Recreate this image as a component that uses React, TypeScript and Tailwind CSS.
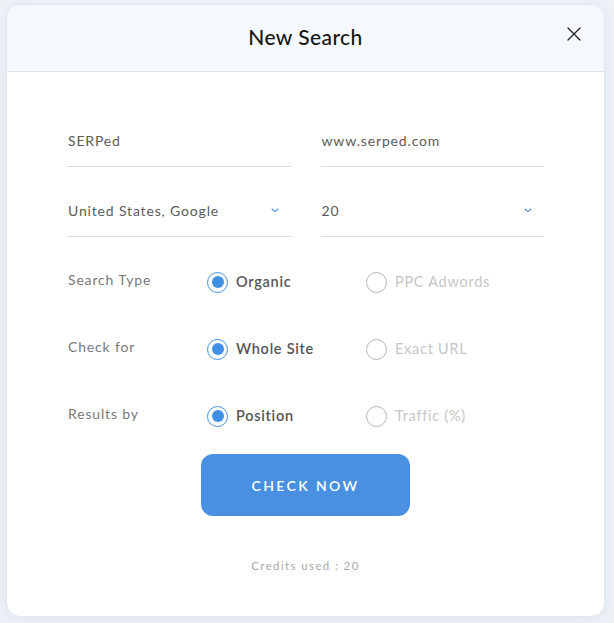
import { useState } from "react";

const FONT = { fontFamily: "Lato, 'Open Sans', sans-serif" };

function Field({ value, select }: { value: string; select?: boolean }) {
  return (
    <div className="flex items-center justify-between border-b border-[#dcdde2] pb-[15px]">
      <span className="text-[14px] leading-[20px] tracking-[0.06em] text-[#5b5b5b] pl-[1px]">{value}</span>
      {select && (
        <svg className="mr-[12px] mt-[-2px]" width="8" height="5" viewBox="0 0 8 5" fill="none">
          <path d="M1 1l3 2.6L7 1" stroke="#4a90e2" strokeWidth="1.1" strokeLinecap="round" />
        </svg>
      )}
    </div>
  );
}

function Radio({ label, checked, onClick }: { label: string; checked: boolean; onClick: () => void }) {
  return (
    <button type="button" onClick={onClick} className="flex items-center gap-[8px]">
      {checked ? (
        <span className="w-[21px] h-[21px] rounded-full border-[1.5px] border-[#4a90e2] flex items-center justify-center">
          <span className="w-[12px] h-[12px] rounded-full bg-[#3f8fe6]" />
        </span>
      ) : (
        <span className="w-[21px] h-[21px] rounded-full border border-[#b4b4b4]" />
      )}
      <span
        className={`text-[14.5px] leading-[20px] tracking-[0.05em] ${
          checked ? "font-semibold text-[#555555]" : "text-[#c6c6c6]"
        }`}
      >
        {label}
      </span>
    </button>
  );
}

const ROWS = [
  { label: "Search Type", options: ["Organic", "PPC Adwords"] },
  { label: "Check for", options: ["Whole Site", "Exact URL"] },
  { label: "Results by", options: ["Position", "Traffic (%)"] },
];

export default function App() {
  const [picked, setPicked] = useState<number[]>([0, 0, 0]);

  return (
    <div className="min-h-[623px] bg-[#eef2f7] pt-[4px] pl-[6px]" style={FONT}>
      <div className="w-[599px] rounded-[14px] bg-white border border-[#e2e6ee] shadow-[0_2px_14px_rgba(160,175,200,0.18)] overflow-hidden">
        <div className="relative h-[67px] bg-[#f5f8fc] border-b border-[#dfe3ea] flex items-center justify-center">
          <h2 className="text-[21px] font-medium tracking-[0.02em] text-[#161616] mt-[-3px]">New Search</h2>
          <button type="button" className="absolute right-[23px] top-[22px] text-[#222]">
            <svg width="14" height="14" viewBox="0 0 14 14" fill="none">
              <path d="M1 1l12 12M13 1L1 13" stroke="currentColor" strokeWidth="1.3" strokeLinecap="round" />
            </svg>
          </button>
        </div>

        <div className="px-[60px] pt-[59px] pb-[42px] flex flex-col">
          <div className="grid grid-cols-2 gap-x-[30px] gap-y-[34px]">
            <Field value="SERPed" />
            <Field value="www.serped.com" />
            <Field value="United States, Google" select />
            <Field value="20" select />
          </div>

          <div className="mt-[33px] flex flex-col gap-[43px]">
            {ROWS.map((row, i) => (
              <div key={row.label} className="flex items-center h-[24px]">
                <span className="w-[140px] pl-[1px] pb-[6px] text-[14px] tracking-[0.06em] text-[#787878]">
                  {row.label}
                </span>
                <div className="w-[159px]">
                  <Radio
                    label={row.options[0]}
                    checked={picked[i] === 0}
                    onClick={() => setPicked((p) => p.map((v, j) => (j === i ? 0 : v)))}
                  />
                </div>
                <Radio
                  label={row.options[1]}
                  checked={picked[i] === 1}
                  onClick={() => setPicked((p) => p.map((v, j) => (j === i ? 1 : v)))}
                />
              </div>
            ))}
          </div>

          <button
            type="button"
            className="mt-[26px] self-center w-[209px] h-[62px] rounded-[12px] bg-[#4a90e2] text-white text-[14px] font-semibold tracking-[0.17em]"
          >
            CHECK NOW
          </button>

          <p className="mt-[42px] text-center text-[11.5px] leading-[16px] tracking-[0.12em] text-[#a9a9a9]">
            Credits used : 20
          </p>
        </div>
      </div>
    </div>
  );
}
